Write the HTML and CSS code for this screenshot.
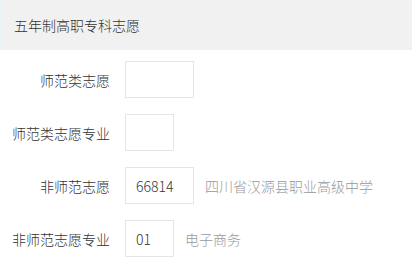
FILE: index.html
```html
<!DOCTYPE html>
<html lang="zh-CN">
<head>
<meta charset="utf-8">
<link rel="stylesheet" href="styles.css">
</head>
<body>
<div class="header">五年制高职专科志愿</div>
<div class="form">
  <div class="row">
    <div class="label">师范类志愿</div>
    <div class="box wide"></div>
  </div>
  <div class="row">
    <div class="label">师范类志愿专业</div>
    <div class="box narrow"></div>
  </div>
  <div class="row">
    <div class="label">非师范志愿</div>
    <div class="box wide">66814</div>
    <div class="hint">四川省汉源县职业高级中学</div>
  </div>
  <div class="row">
    <div class="label">非师范志愿专业</div>
    <div class="box narrow">01</div>
    <div class="hint">电子商务</div>
  </div>
</div>
</body>
</html>
```
FILE: styles.css
```css
html, body {
  margin: 0;
  padding: 0;
  background: #ffffff;
}
body {
  width: 412px;
  height: 264px;
  overflow: hidden;
  font-family: "Noto Sans CJK SC", "Noto Sans", sans-serif;
  font-size: 14px;
  font-weight: 300;
  color: #333333;
}
.header {
  height: 50px;
  box-sizing: border-box;
  display: flex;
  align-items: center;
  padding-left: 12px;
  border-left: 2px solid #e3f6f8;
  background: #f1f1f1;
  color: #333333;
}
.form {
  display: flex;
  flex-direction: column;
  gap: 16px;
  padding-top: 11px;
}
.row {
  display: flex;
  align-items: center;
  height: 37px;
}
.label {
  width: 110px;
  text-align: right;
  margin-right: 15px;
  white-space: nowrap;
  color: #333333;
}
.box {
  box-sizing: border-box;
  height: 37px;
  border: 1px solid #e6e6e6;
  display: flex;
  align-items: center;
  padding-left: 10px;
  color: #333333;
}
.box.wide { width: 69px; }
.box.narrow { width: 49px; }
.hint {
  margin-left: 11px;
  color: #999999;
  white-space: nowrap;
}
```
